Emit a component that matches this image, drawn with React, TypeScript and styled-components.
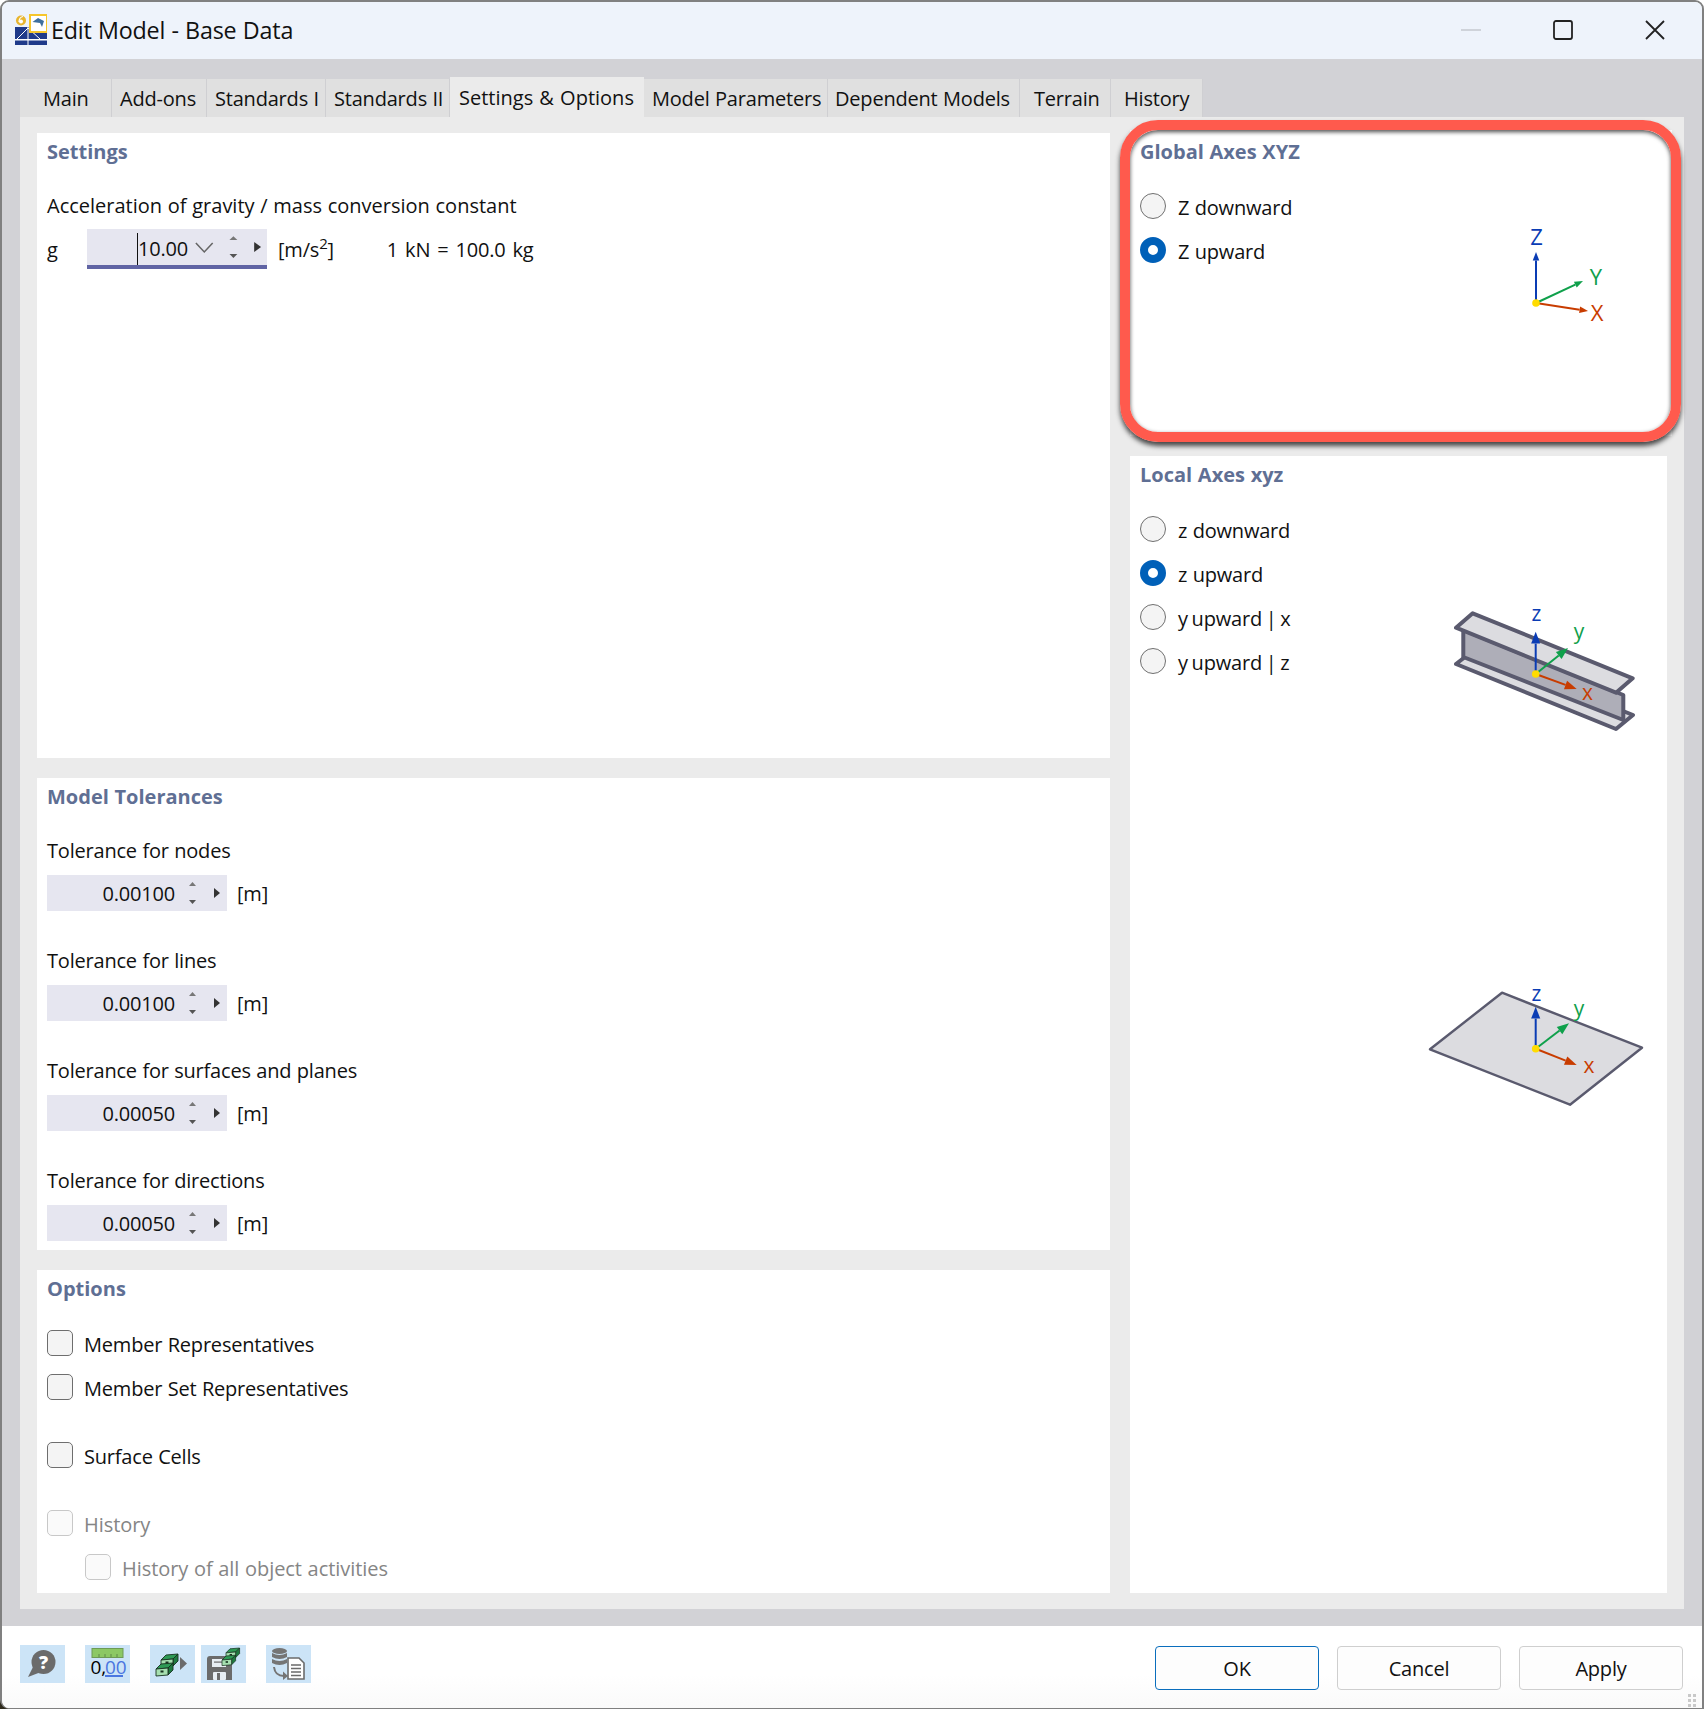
import React from 'react'
import styled, { createGlobalStyle } from 'styled-components'

const GlobalStyle = createGlobalStyle`
  html, body {
    margin: 0;
    padding: 0;
    background: linear-gradient(#fff 1690px, #2e2a1c 1690px);
  }
  body {
    font-family: "Open Sans", "Noto Sans", "Liberation Sans", sans-serif;
    font-size: 20px;
    letter-spacing: -0.2px;
    word-spacing: 0.5px;
    color: #111;
  }
`

const Window = styled.div`
  box-sizing: border-box;
  width: 1704px;
  height: 1709px;
  display: flex;
  flex-direction: column;
  border: 2px solid #808080;
  border-bottom-width: 1px;
  border-radius: 9px 9px 0 9px;
  overflow: hidden;
  background: #fff;
`

const TitleBar = styled.div`
  height: 56px;
  flex: none;
  display: flex;
  align-items: center;
  padding: 0 0 1px 11px;
  background: #eef3fb;
`

const WindowTitle = styled.div`
  margin-left: 4px;
  font-size: 23.3px;
  flex: 1;
`

const WindowControls = styled.div`
  display: flex;
  align-items: center;
  gap: 70px;
  padding-right: 36px;
`

const Body = styled.div`
  flex: 1;
  display: flex;
  flex-direction: column;
  padding: 18px 18px 17px 18px;
  background: #d2d2d6;
  min-height: 0;
`

const Tabs = styled.div`
  display: flex;
  align-items: flex-end;
  height: 40px;
  flex: none;
`

const Tab = styled.div<{ $width: number; $pad: number; $active?: boolean }>`
  box-sizing: border-box;
  width: ${(p) => p.$width}px;
  height: ${(p) => (p.$active ? 40 : 38)}px;
  padding: 1px 0 0 ${(p) => p.$pad}px;
  display: flex;
  align-items: center;
  white-space: nowrap;
  background: ${(p) => (p.$active ? '#ebebeb' : '#e0e0e0')};
  border-right: ${(p) => (p.$active ? 'none' : '1px solid #cfcfd2')};
  letter-spacing: ${(p) => (p.$active ? '0' : '-0.2px')};
  word-spacing: ${(p) => (p.$active ? '1px' : '0.5px')};
`

const TabPage = styled.div`
  flex: 1;
  display: grid;
  grid-template-columns: 1073px 537px;
  column-gap: 20px;
  padding: 16px 17px;
  background: #ebebeb;
  min-height: 0;
`

const Column = styled.div`
  display: flex;
  flex-direction: column;
  gap: 20px;
`

const Panel = styled.section<{ $height?: number; $grow?: boolean }>`
  box-sizing: border-box;
  position: relative;
  padding-left: 10px;
  background: #fff;
  height: ${(p) => (p.$height ? `${p.$height}px` : 'auto')};
  flex: ${(p) => (p.$grow ? 1 : 'none')};
`

const GlobalPanel = styled(Panel)`
  margin: -3px -5px 0 0;
  padding-top: 3px;
`

const Highlight = styled.div`
  position: absolute;
  box-sizing: border-box;
  left: -10px;
  top: -10px;
  width: 561px;
  height: 322px;
  border: 10px solid #ff5a4d;
  border-radius: 38px;
  box-shadow: 0 4px 5px rgba(0, 0, 0, 0.7), inset 0 2px 4px rgba(0, 0, 0, 0.7);
  pointer-events: none;
`

const PanelTitle = styled.h2`
  margin: 0;
  height: 38px;
  line-height: 38px;
  font-size: 20px;
  font-weight: 700;
  letter-spacing: 0;
  color: #5f6f94;
`

const FieldLabel = styled.div<{ $top: number; $wide?: boolean }>`
  height: 34px;
  line-height: 34px;
  margin-top: ${(p) => p.$top}px;
  letter-spacing: ${(p) => (p.$wide ? '0' : '-0.2px')};
`

const FieldRow = styled.div`
  display: flex;
  align-items: center;
  margin-top: 7px;
`

const GravityRow = styled(FieldRow)`
  margin-top: 6px;
`

const Symbol = styled.span`
  width: 40px;
`

const Field = styled.div`
  width: 180px;
  height: 36px;
  display: flex;
  align-items: center;
  background: #e6e6f0;
`

const GravityField = styled(Field)`
  height: 32px;
  padding-top: 4px;
  border-bottom: 4px solid #6064a4;
`

const FieldValue = styled.span`
  width: 128px;
  text-align: right;
`

const GravityValue = styled.span`
  margin-left: 50px;
  width: 49px;
  height: 32px;
  line-height: 32px;
  border-left: 1.5px solid #111;
`

const Unit = styled.span<{ $left: number }>`
  margin-left: ${(p) => p.$left}px;
`

const Superscript = styled.sup`
  font-size: 15px;
  line-height: 0;
`

const Equation = styled.span`
  margin-left: 53px;
  word-spacing: 2px;
`

const Options = styled.div`
  padding-top: 22px;
`

const OptionRow = styled.div<{ $top?: number; $indent?: boolean; $disabled?: boolean }>`
  height: 26px;
  display: flex;
  align-items: center;
  gap: 12px;
  margin-top: ${(p) => p.$top ?? 0}px;
  margin-left: ${(p) => (p.$indent ? 38 : 0)}px;
  color: ${(p) => (p.$disabled ? '#858585' : 'inherit')};
  letter-spacing: ${(p) => (p.$disabled ? '-0.05px' : '-0.2px')};
`

const OptionText = styled.span<{ $tight?: boolean }>`
  padding-top: 2px;
  word-spacing: ${(p) => (p.$tight ? '-1.2px' : '0.5px')};
`

const Check = styled.span<{ $disabled?: boolean }>`
  box-sizing: border-box;
  width: 26px;
  height: 26px;
  flex: none;
  margin-right: -1px;
  border-radius: 5px;
  background: ${(p) => (p.$disabled ? '#fafafa' : '#f4f4f4')};
  border: 1.5px solid ${(p) => (p.$disabled ? '#c8c8c8' : '#6e6e6e')};
`

const Radio = styled.span<{ $checked?: boolean }>`
  box-sizing: border-box;
  width: 26px;
  height: 26px;
  flex: none;
  border-radius: 50%;
  background: ${(p) => (p.$checked ? '#fff' : '#f4f4f4')};
  border: ${(p) => (p.$checked ? '8px solid #0060b8' : '1.5px solid #707070')};
`

const AxesSection = styled.div`
  display: flex;
  justify-content: space-between;
  align-items: flex-start;
`

const Figures = styled.div<{ $right: number; $top: number; $gap?: number }>`
  display: flex;
  flex-direction: column;
  gap: ${(p) => p.$gap ?? 0}px;
  margin-right: ${(p) => p.$right}px;
  margin-top: ${(p) => p.$top}px;
`

const Drawing = styled.svg`
  display: block;
`

const AxisText = styled.text`
  font-family: "Open Sans", "Noto Sans", sans-serif;
  letter-spacing: 0;
`

const Footer = styled.footer`
  height: 82px;
  flex: none;
  display: flex;
  align-items: flex-start;
  justify-content: space-between;
  box-sizing: border-box;
  padding: 19px 19px 0 18px;
  background: linear-gradient(#fff 60%, #fafafa);
  position: relative;
`

const Tools = styled.div`
  display: flex;
`

const ToolButton = styled.div<{ $left?: number }>`
  width: 45px;
  height: 38px;
  background: #cce4f7;
  margin-left: ${(p) => p.$left ?? 0}px;
`

const Actions = styled.div`
  display: flex;
  gap: 18px;
  margin-top: 1px;
`

const ActionButton = styled.div<{ $primary?: boolean }>`
  box-sizing: border-box;
  width: 164px;
  height: 44px;
  display: flex;
  align-items: center;
  justify-content: center;
  border-radius: 4px;
  background: #fdfdfd;
  border: 1px solid ${(p) => (p.$primary ? '#0a6ebd' : '#cfcfcf')};
`

const Grip = styled.svg`
  position: absolute;
  right: 1px;
  bottom: 1px;
`

const BLUE = '#0a3cb4'
const GREEN = '#0fa04b'
const RED = '#c83c00'

type P = [number, number]

function Arrow({ from, to, color, head }: { from: P; to: P; color: string; head: number }) {
  const a = Math.atan2(to[1] - from[1], to[0] - from[0])
  const bx = to[0] - Math.cos(a) * head * 1.7
  const by = to[1] - Math.sin(a) * head * 1.7
  const nx = -Math.sin(a) * head * 0.65
  const ny = Math.cos(a) * head * 0.65
  return (
    <g>
      <line x1={from[0]} y1={from[1]} x2={bx} y2={by} stroke={color} strokeWidth={2} />
      <polygon points={`${to[0]},${to[1]} ${bx + nx},${by + ny} ${bx - nx},${by - ny}`} fill={color} />
    </g>
  )
}

function Axes(props: { o: P; z: P; y: P; x: P; lz: P; ly: P; lx: P; upper?: boolean; size: number; head: number }) {
  const { o, z, y, x, lz, ly, lx, upper, size, head } = props
  return (
    <g>
      <Arrow from={o} to={z} color={BLUE} head={head} />
      <Arrow from={o} to={y} color={GREEN} head={head} />
      <Arrow from={o} to={x} color={RED} head={head} />
      <circle cx={o[0]} cy={o[1]} r={3.8} fill="#ffdc00" />
      <AxisText x={lz[0]} y={lz[1]} fill={BLUE} fontSize={size} textAnchor="middle">{upper ? 'Z' : 'z'}</AxisText>
      <AxisText x={ly[0]} y={ly[1]} fill={GREEN} fontSize={size} textAnchor="middle">{upper ? 'Y' : 'y'}</AxisText>
      <AxisText x={lx[0]} y={lx[1]} fill={RED} fontSize={size} textAnchor="middle">{upper ? 'X' : 'x'}</AxisText>
    </g>
  )
}

function AppIcon() {
  return (
    <svg width="34" height="34" viewBox="0 0 34 34">
      <rect x="2" y="14" width="32" height="18" fill="#1f3a8a" />
      <rect x="2" y="26" width="32" height="1.5" fill="#fff" />
      <path d="M15 14 L15 32 M15 15 L4 26 M15 15 L27 26" stroke="#fff" strokeWidth="1" fill="none" />
      <rect x="17" y="2" width="17" height="17" fill="#fff" stroke="#f6c62c" strokeWidth="2" />
      <path d="M19.500 9 L25 5 L31 8 L29 14 L27 10 Z" fill="#3f6f9f" />
      <circle cx="8" cy="7.500" r="5" fill="#e8b52e" />
      <circle cx="8" cy="8.500" r="2" fill="#fff" />
      <path d="M10 3.500 C7 4 6 6 6 9" stroke="#fff" strokeWidth="1.200" fill="none" />
    </svg>
  )
}

function Spinner() {
  return (
    <svg width="52" height="36" viewBox="0 0 52 36">
      <polygon points="14,11 21,11 17.500,7" fill="#777" />
      <polygon points="14,25 21,25 17.500,29" fill="#555" />
      <polygon points="39,13 39,23 45,18" fill="#333" />
    </svg>
  )
}

function GravitySpinner() {
  return (
    <svg width="81" height="36" viewBox="0 0 81 36">
      <polyline points="9,12 17.500,21 26,12" fill="none" stroke="#666" strokeWidth="1.600" />
      <polygon points="43,9 51,9 47,5" fill="#777" />
      <polygon points="43,23 51,23 47,27" fill="#555" />
      <polygon points="68,11 68,21 75,16" fill="#333" />
    </svg>
  )
}

function Drawer({ x, y }: { x: number; y: number }) {
  return (
    <g transform={`translate(${x} ${y})`}>
      <polygon points="0,5 5,0 17,-1 12,4" fill="#2e9a55" />
      <polygon points="12,4 17,-1 17,6 12,11" fill="#1f7a40" />
      <polygon points="0,5 12,4 12,11 0,12" fill="#a6dfb0" />
      <rect x="4.500" y="6.500" width="3" height="2" fill="#16321f" stroke="none" />
    </g>
  )
}

function Cabinet({ x, y, s = 1 }: { x: number; y: number; s?: number }) {
  return (
    <g transform={`translate(${x} ${y}) scale(${s})`} stroke="#16321f" strokeWidth="0.900">
      <Drawer x={5} y={1} />
      <Drawer x={0} y={10} />
    </g>
  )
}

const ToolIcon = styled.svg`
  display: block;
`

function HelpIcon() {
  return (
    <ToolIcon width="45" height="38" viewBox="0 0 45 38">
      <circle cx="23.500" cy="17" r="12" fill="#6b6b6b" />
      <polygon points="8,32 14,20 21,27" fill="#6b6b6b" />
      <text x="23.500" y="23.500" fontSize="18" fontWeight="800" fill="#fff" textAnchor="middle" fontFamily="Open Sans">?</text>
    </ToolIcon>
  )
}

function DecimalsIcon() {
  return (
    <ToolIcon width="45" height="38" viewBox="0 0 45 38">
      <rect x="7" y="3.500" width="31" height="9" fill="#8cc864" stroke="#6d9a55" />
      <path d="M14 12V9 M20 12V9 M26 12V9 M32 12V9" stroke="#5f8a49" strokeWidth="1" />
      <text x="5.500" y="29" fontSize="19" fill="#000" fontFamily="Open Sans">0,</text>
      <text x="20" y="29" fontSize="19" fill="#4a76e0" fontFamily="Open Sans">00</text>
      <rect x="20" y="30" width="18" height="2" fill="#4a76e0" />
    </ToolIcon>
  )
}

function DrawerIcon() {
  return (
    <ToolIcon width="45" height="38" viewBox="0 0 45 38">
      <Cabinet x={6} y={9} />
      <polygon points="30,12 30,25 37,18.500" fill="#6b6b6b" />
    </ToolIcon>
  )
}

function SaveIcon() {
  return (
    <ToolIcon width="45" height="38" viewBox="0 0 45 38">
      <path d="M6 14 Q6 11 9 11 H27 L31 15 V35 H6 Z" fill="#6b6b6b" />
      <rect x="11" y="14" width="14" height="8" fill="#e8eef3" />
      <rect x="13" y="16.500" width="9" height="1.200" fill="#6b6b6b" />
      <rect x="12" y="27" width="13" height="8" rx="1" fill="#e8eef3" />
      <rect x="16" y="28" width="3" height="7" fill="#6b6b6b" />
      <Cabinet x={21} y={3} s={0.8} />
    </ToolIcon>
  )
}

function ImportIcon() {
  return (
    <ToolIcon width="45" height="38" viewBox="0 0 45 38">
      <g fill="#757575">
        <ellipse cx="13.500" cy="6" rx="7.500" ry="3" />
        <path d="M6 8 Q13.500 12 21 8 V12 Q13.500 16 6 12 Z" />
        <path d="M6 14 Q13.500 18 21 14 V18 Q13.500 22 6 18 Z" />
      </g>
      <path d="M8 22 Q9 31 18 31" fill="none" stroke="#757575" strokeWidth="2" />
      <polygon points="17,26.500 22,31 17,35" fill="#757575" />
      <path d="M22 13 H33 L38 18 V34 H22 Z" fill="#fff" stroke="#6b6b6b" strokeWidth="1.600" />
      <path d="M25 20 H35 M25 23.500 H35 M25 27 H35 M25 30.500 H35" stroke="#6b6b6b" strokeWidth="1.600" />
    </ToolIcon>
  )
}

const TABS = [
  { label: 'Main', width: 92, pad: 23 },
  { label: 'Add-ons', width: 95, pad: 8 },
  { label: 'Standards I', width: 119, pad: 8 },
  { label: 'Standards II', width: 124, pad: 8 },
  { label: 'Settings & Options', width: 194, pad: 9, active: true },
  { label: 'Model Parameters', width: 184, pad: 8 },
  { label: 'Dependent Models', width: 192, pad: 7 },
  { label: 'Terrain', width: 91, pad: 14 },
  { label: 'History', width: 92, pad: 13 },
]

const TOLERANCES = [
  { label: 'Tolerance for nodes', value: '0.00100' },
  { label: 'Tolerance for lines', value: '0.00100' },
  { label: 'Tolerance for surfaces and planes', value: '0.00050' },
  { label: 'Tolerance for directions', value: '0.00050' },
]

export default function App() {
  return (
    <>
      <GlobalStyle />
      <Window>
        <TitleBar>
          <AppIcon />
          <WindowTitle>Edit Model - Base Data</WindowTitle>
          <WindowControls>
            <svg width="22" height="22" viewBox="0 0 22 22">
              <line x1="1" y1="11" x2="21" y2="11" stroke="#c4c8cf" strokeWidth="1.500" />
            </svg>
            <svg width="22" height="22" viewBox="0 0 22 22">
              <rect x="2" y="2" width="18" height="18" rx="2" fill="none" stroke="#222" strokeWidth="1.800" />
            </svg>
            <svg width="22" height="22" viewBox="0 0 22 22">
              <path d="M2 2 L20 20 M20 2 L2 20" stroke="#222" strokeWidth="1.800" />
            </svg>
          </WindowControls>
        </TitleBar>

        <Body>
          <Tabs>
            {TABS.map((t) => (
              <Tab key={t.label} $width={t.width} $pad={t.pad} $active={t.active}>{t.label}</Tab>
            ))}
          </Tabs>
          <TabPage>
            <Column>
              <Panel $height={625}>
                <PanelTitle>Settings</PanelTitle>
                <FieldLabel $top={18} $wide>Acceleration of gravity / mass conversion constant</FieldLabel>
                <GravityRow>
                  <Symbol>g</Symbol>
                  <GravityField>
                    <GravityValue>10.00</GravityValue>
                    <GravitySpinner />
                  </GravityField>
                  <Unit $left={11}>[m/s<Superscript>2</Superscript>]</Unit>
                  <Equation>1 kN = 100.0 kg</Equation>
                </GravityRow>
              </Panel>

              <Panel $height={472}>
                <PanelTitle>Model Tolerances</PanelTitle>
                {TOLERANCES.map((t, i) => (
                  <div key={t.label}>
                    <FieldLabel $top={i === 0 ? 18 : 33}>{t.label}</FieldLabel>
                    <FieldRow>
                      <Field>
                        <FieldValue>{t.value}</FieldValue>
                        <Spinner />
                      </Field>
                      <Unit $left={10}>[m]</Unit>
                    </FieldRow>
                  </div>
                ))}
              </Panel>

              <Panel $grow>
                <PanelTitle>Options</PanelTitle>
                <Options>
                  <OptionRow><Check /><OptionText>Member Representatives</OptionText></OptionRow>
                  <OptionRow $top={18}><Check /><OptionText>Member Set Representatives</OptionText></OptionRow>
                  <OptionRow $top={42}><Check /><OptionText>Surface Cells</OptionText></OptionRow>
                  <OptionRow $top={42} $disabled><Check $disabled /><OptionText>History</OptionText></OptionRow>
                  <OptionRow $top={18} $indent $disabled><Check $disabled /><OptionText>History of all object activities</OptionText></OptionRow>
                </Options>
              </Panel>
            </Column>

            <Column>
              <GlobalPanel $height={306}>
                <PanelTitle>Global Axes XYZ</PanelTitle>
                <AxesSection>
                  <Options>
                    <OptionRow><Radio /><OptionText>Z downward</OptionText></OptionRow>
                    <OptionRow $top={18}><Radio $checked /><OptionText>Z upward</OptionText></OptionRow>
                  </Options>
                  <Figures $right={62} $top={44}>
                    <Drawing width="100" height="120" viewBox="0 -10 100 120">
                      <Axes
                        upper
                        o={[26, 78]}
                        z={[26, 27]}
                        y={[73, 56]}
                        x={[78, 86]}
                        lz={[26.500, 20]}
                        ly={[86, 60]}
                        lx={[87, 96]}
                        size={22}
                        head={5}
                      />
                    </Drawing>
                  </Figures>
                </AxesSection>
                <Highlight />
              </GlobalPanel>

              <Panel $grow>
                <PanelTitle>Local Axes xyz</PanelTitle>
                <AxesSection>
                  <Options>
                    <OptionRow><Radio /><OptionText>z downward</OptionText></OptionRow>
                    <OptionRow $top={18}><Radio $checked /><OptionText>z upward</OptionText></OptionRow>
                    <OptionRow $top={18}><Radio /><OptionText $tight>y upward | x</OptionText></OptionRow>
                    <OptionRow $top={18}><Radio /><OptionText $tight>y upward | z</OptionText></OptionRow>
                  </Options>
                  <Figures $right={7} $top={86} $gap={210}>
                    <Drawing width="260" height="170" viewBox="0 0 260 170">
                      <g stroke="#5a5a6e" strokeWidth="4" strokeLinejoin="round">
                        <polygon points="56,84 72.700,71 233,135 216,149" fill="#dcdce0" />
                        <polygon points="63.300,50 223.300,115 223.300,140 63.300,77" fill="#aeaeb8" />
                        <polygon points="56,47.700 72.700,33.300 232.700,98.300 216,112.700" fill="#dcdce0" />
                      </g>
                      <Axes
                        o={[135.700, 94]}
                        z={[135.700, 51.700]}
                        y={[168, 68]}
                        x={[176.700, 109]}
                        lz={[136.500, 41]}
                        ly={[179, 59]}
                        lx={[187.500, 120]}
                        size={21}
                        head={7}
                      />
                    </Drawing>
                    <Drawing width="260" height="170" viewBox="0 0 260 170">
                      <polygon points="30,89.300 102,32.700 242,87.700 170,144.700" fill="#dcdce0" stroke="#5a5a6e" strokeWidth="2.400" strokeLinejoin="round" />
                      <Axes
                        o={[135.700, 88.700]}
                        z={[135.700, 46.700]}
                        y={[169, 63.300]}
                        x={[176.700, 105]}
                        lz={[136.500, 41]}
                        ly={[179, 56]}
                        lx={[189, 113]}
                        size={21}
                        head={7}
                      />
                    </Drawing>
                  </Figures>
                </AxesSection>
              </Panel>
            </Column>
          </TabPage>
        </Body>

        <Footer>
          <Tools>
            <ToolButton><HelpIcon /></ToolButton>
            <ToolButton $left={20}><DecimalsIcon /></ToolButton>
            <ToolButton $left={20}><DrawerIcon /></ToolButton>
            <ToolButton $left={6}><SaveIcon /></ToolButton>
            <ToolButton $left={20}><ImportIcon /></ToolButton>
          </Tools>
          <Actions>
            <ActionButton $primary>OK</ActionButton>
            <ActionButton>Cancel</ActionButton>
            <ActionButton>Apply</ActionButton>
          </Actions>
          <Grip width="14" height="14" viewBox="0 0 14 14">
            <g fill="#c9c9c9">
              <rect x="1" y="1" width="3" height="3" />
              <rect x="6" y="1" width="3" height="3" />
              <rect x="1" y="6" width="3" height="3" />
              <rect x="6" y="6" width="3" height="3" />
              <rect x="1" y="11" width="3" height="3" />
              <rect x="6" y="11" width="3" height="3" />
            </g>
          </Grip>
        </Footer>
      </Window>
    </>
  )
}
